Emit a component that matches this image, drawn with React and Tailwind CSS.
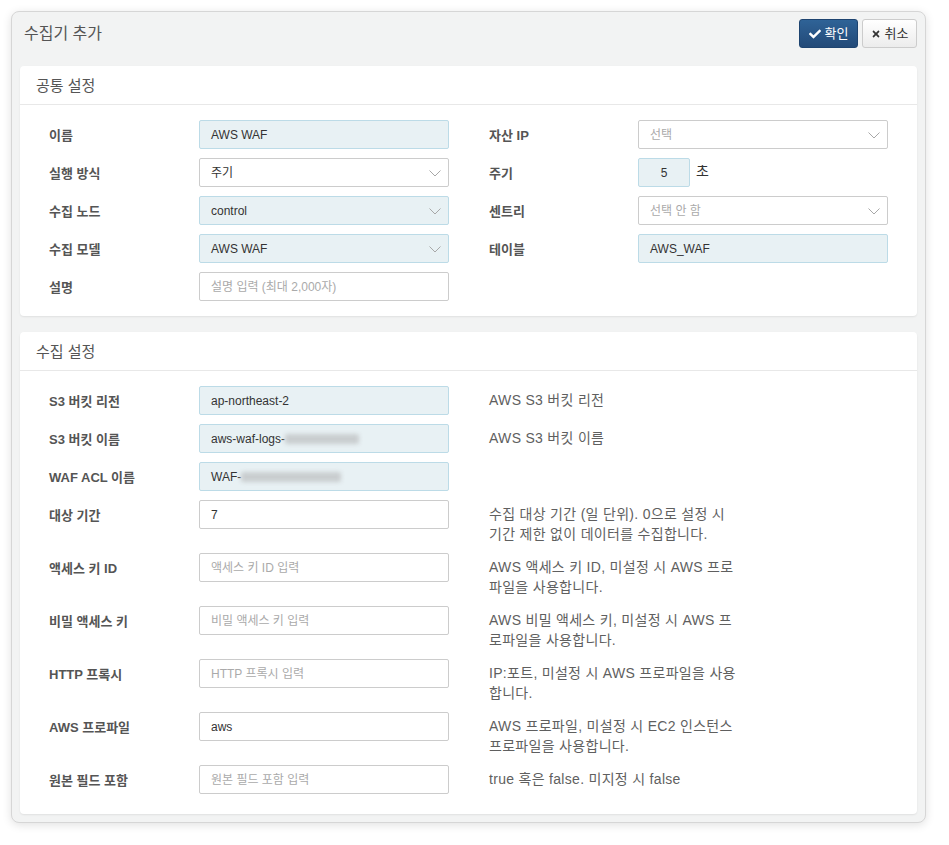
import React from "react";
import { FaCheck, FaTimes } from "react-icons/fa";

const FONT = { fontFamily: '"Liberation Sans", "Noto Sans CJK KR", sans-serif' };

function Chevron() {
  return (
    <svg width="12" height="7" viewBox="0 0 12 7" className="absolute right-[7px] top-[11px]">
      <polyline points="0.5,0.5 6,6 11.5,0.5" fill="none" stroke="#a8a8a8" strokeWidth="1" />
    </svg>
  );
}

function Field({ value, placeholder, filled, select, width = "w-[250px]", center, children }) {
  return (
    <div
      className={`relative h-[29px] ${width} shrink-0 rounded-[2px] border flex items-center text-[12px] ${
        center ? "justify-center" : "pl-[11px]"
      } ${filled ? "bg-[#e8f1f4] border-[#bcdbe7]" : "bg-white border-[#cccccc]"}`}
    >
      {children ? (
        children
      ) : value ? (
        <span className="text-[#333]">{value}</span>
      ) : (
        <span className="text-[#aaaaaa]">{placeholder}</span>
      )}
      {select && <Chevron />}
    </div>
  );
}

function Label({ children, w = "w-[150px]" }) {
  return (
    <div className={`${w} shrink-0 h-[29px] pt-[3px] flex items-center text-[13px] font-bold text-[#555]`}>
      {children}
    </div>
  );
}

function Card({ title, children, className = "" }) {
  return (
    <div className={`bg-white rounded-[4px] shadow-[0_1px_2px_rgba(0,0,0,0.08)] ${className}`}>
      <div className="h-[39px] border-b border-[#e8e8e8] px-[16px] pt-[3px] flex items-center text-[15px] text-[#555]">
        {title}
      </div>
      {children}
    </div>
  );
}

function Blur({ w }) {
  return <span className={`inline-block h-[10px] ${w} bg-[#c9cdcf] blur-[2px] rounded-[2px]`} />;
}

function Desc({ lines }) {
  return (
    <div className="ml-[40px] pt-[4px] text-[14px] leading-[20px] tracking-[0.3px] text-[#5f5f5f] whitespace-nowrap">
      {lines.map((l, i) => (
        <div key={i}>{l}</div>
      ))}
    </div>
  );
}

export default function App() {
  const rows2 = [
    { label: "S3 버킷 리전", field: <Field filled value="ap-northeast-2" />, desc: ["AWS S3 버킷 리전"] },
    {
      label: "S3 버킷 이름",
      field: (
        <Field filled>
          <span className="text-[#333]">aws-waf-logs-</span>
          <Blur w="w-[74px]" />
        </Field>
      ),
      desc: ["AWS S3 버킷 이름"],
    },
    {
      label: "WAF ACL 이름",
      field: (
        <Field filled>
          <span className="text-[#333]">WAF-</span>
          <Blur w="w-[100px]" />
        </Field>
      ),
      desc: [],
    },
    {
      label: "대상 기간",
      field: <Field value="7" />,
      desc: ["수집 대상 기간 (일 단위). 0으로 설정 시", "기간 제한 없이 데이터를 수집합니다."],
    },
    {
      label: "액세스 키 ID",
      field: <Field placeholder="액세스 키 ID 입력" />,
      desc: ["AWS 액세스 키 ID, 미설정 시 AWS 프로", "파일을 사용합니다."],
    },
    {
      label: "비밀 액세스 키",
      field: <Field placeholder="비밀 액세스 키 입력" />,
      desc: ["AWS 비밀 액세스 키, 미설정 시 AWS 프", "로파일을 사용합니다."],
    },
    {
      label: "HTTP 프록시",
      field: <Field placeholder="HTTP 프록시 입력" />,
      desc: ["IP:포트, 미설정 시 AWS 프로파일을 사용", "합니다."],
    },
    {
      label: "AWS 프로파일",
      field: <Field value="aws" />,
      desc: ["AWS 프로파일, 미설정 시 EC2 인스턴스", "프로파일을 사용합니다."],
    },
    {
      label: "원본 필드 포함",
      field: <Field placeholder="원본 필드 포함 입력" />,
      desc: ["true 혹은 false. 미지정 시 false"],
    },
  ];

  return (
    <div className="bg-white min-h-[845px] p-[11px]" style={FONT}>
      <div className="w-[915px] border border-[#d6d6d6] rounded-[8px] bg-[#f2f3f3] shadow-[0_2px_10px_rgba(0,0,0,0.12)] px-[8px] pb-[8px]">
        {/* title bar */}
        <div className="h-[54px] flex justify-between items-start">
          <div className="mt-[12px] pl-[4px] text-[16px] leading-[20px] text-[#555]">수집기 추가</div>
          <div className="mt-[7px] flex gap-[4px]">
            <button className="h-[29px] w-[59px] rounded-[3px] border border-[#1e4470] bg-gradient-to-b from-[#2f6397] to-[#234a78] text-white text-[13px] flex items-center justify-center gap-[4px]">
              <FaCheck className="w-[12px] h-[12px]" />
              확인
            </button>
            <button className="h-[29px] w-[55px] rounded-[3px] border border-[#cccccc] bg-gradient-to-b from-white to-[#ececec] text-[#333] text-[13px] flex items-center justify-center gap-[4px]">
              <FaTimes className="w-[10px] h-[10px] text-[#333]" />
              취소
            </button>
          </div>
        </div>

        {/* 공통 설정 */}
        <Card title="공통 설정">
          <div className="pt-[15px] pb-[15px] pl-[29px] flex flex-col gap-[9px]">
            <div className="flex gap-[40px]">
              <div className="flex">
                <Label>이름</Label>
                <Field filled value="AWS WAF" />
              </div>
              <div className="flex">
                <Label w="w-[149px]">자산 IP</Label>
                <Field select placeholder="선택" />
              </div>
            </div>
            <div className="flex gap-[40px]">
              <div className="flex">
                <Label>실행 방식</Label>
                <Field select value="주기" />
              </div>
              <div className="flex">
                <Label w="w-[149px]">주기</Label>
                <Field filled value="5" width="w-[52px]" center />
                <span className="ml-[6px] text-[14px] text-[#333] leading-[20px] mt-[3px]">초</span>
              </div>
            </div>
            <div className="flex gap-[40px]">
              <div className="flex">
                <Label>수집 노드</Label>
                <Field filled select value="control" />
              </div>
              <div className="flex">
                <Label w="w-[149px]">센트리</Label>
                <Field select placeholder="선택 안 함" />
              </div>
            </div>
            <div className="flex gap-[40px]">
              <div className="flex">
                <Label>수집 모델</Label>
                <Field filled select value="AWS WAF" />
              </div>
              <div className="flex">
                <Label w="w-[149px]">테이블</Label>
                <Field filled value="AWS_WAF" />
              </div>
            </div>
            <div className="flex gap-[40px]">
              <div className="flex">
                <Label>설명</Label>
                <Field placeholder="설명 입력 (최대 2,000자)" />
              </div>
            </div>
          </div>
        </Card>

        {/* 수집 설정 */}
        <Card title="수집 설정" className="mt-[16px]">
          <div className="pt-[15px] pb-[20px] pl-[29px] flex flex-col gap-[9px]">
            {rows2.map((r) => (
              <div key={r.label} className="flex items-start">
                <Label>{r.label}</Label>
                {r.field}
                {r.desc.length > 0 && <Desc lines={r.desc} />}
              </div>
            ))}
          </div>
        </Card>
      </div>
    </div>
  );
}
